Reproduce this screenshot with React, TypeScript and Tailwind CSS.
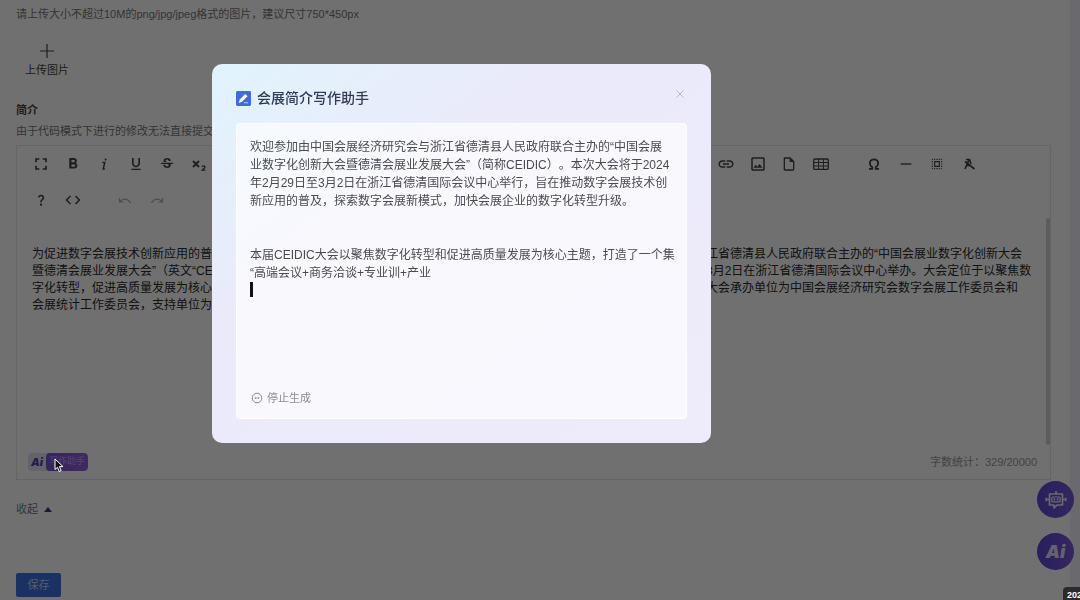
import type { ReactNode } from "react";
import { clsx } from "clsx";
import {
  MdCode,
  MdFormatBold,
  MdFormatUnderlined,
  MdFullscreen,
  MdHorizontalRule,
  MdLink,
  MdOutlineImage,
  MdOutlineInsertDriveFile,
  MdQuestionMark,
  MdSelectAll,
  MdStrikethroughS,
} from "react-icons/md";

type Tool = {
  label: string;
  icon: ReactNode;
  disabled?: boolean;
};

const ItalicIcon = () => (
  <svg viewBox="0 0 16 16" className="size-4" fill="none" stroke="currentColor">
    <path d="M6.5 6.5h2.3L7.2 13h1.6" strokeWidth="1.4" />
    <circle cx="9.6" cy="3.4" r="1" fill="currentColor" stroke="none" />
  </svg>
);

const SubscriptIcon = () => (
  <svg viewBox="0 0 16 16" className="size-4" fill="none" stroke="currentColor">
    <path d="M2 5l6 6M8 5l-6 6" strokeWidth="1.8" />
    <path d="M11.2 11c.2-1.6 2.9-1.4 2.8.1 0 1-1.6 1.7-2.8 3.1h3.2" strokeWidth="1.2" />
  </svg>
);

const TableIcon = () => (
  <svg viewBox="0 0 16 16" className="size-4" fill="none" stroke="currentColor">
    <rect x="0.7" y="3" width="14.6" height="10.4" rx="1" strokeWidth="1.3" />
    <path d="M1 6.5h14M1 10h14M5.6 3v10.4M10.4 3v10.4" strokeWidth="1" />
  </svg>
);

const OmegaIcon = () => (
  <svg viewBox="0 0 16 16" className="size-4" fill="none" stroke="currentColor">
    <path
      d="M3 12.8h3.3v-1.6C2.2 8.7 3.6 3.3 8 3.3s5.8 5.4 1.7 7.9v1.600H13"
      strokeWidth="1.7"
    />
  </svg>
);

const ClearFormatIcon = () => (
  <svg viewBox="0 0 16 16" className="size-4" fill="none" stroke="currentColor">
    <path d="M4 13L8 3.500" strokeWidth="1.600" />
    <path d="M5 3.500h3.500L10 8" strokeWidth="1.600" />
    <path d="M4 5.500l9.500 7.500M6 9.500h4" strokeWidth="1.600" />
  </svg>
);

const UndoIcon = ({ className }: { className?: string }) => (
  <svg viewBox="0 0 16 16" className={clsx("size-4", className)} fill="none" stroke="currentColor">
    <path d="M2.500 6v4h4M3 9.500c3-3.400 8-3.300 10.500 1.500" strokeWidth="1.200" />
  </svg>
);

const leftTools: Tool[] = [
  { label: "全屏", icon: <MdFullscreen className="size-5" /> },
  { label: "粗体", icon: <MdFormatBold className="size-[18px]" /> },
  { label: "斜体", icon: <ItalicIcon /> },
  { label: "下划线", icon: <MdFormatUnderlined className="size-4" /> },
  { label: "删除线", icon: <MdStrikethroughS className="size-4" /> },
  { label: "下标", icon: <SubscriptIcon /> },
];

const insertTools: Tool[] = [
  { label: "链接", icon: <MdLink className="size-[18px]" /> },
  { label: "图片", icon: <MdOutlineImage className="size-[18px]" /> },
  { label: "文件", icon: <MdOutlineInsertDriveFile className="size-4" /> },
  { label: "表格", icon: <TableIcon /> },
];

const extraTools: Tool[] = [
  { label: "特殊字符", icon: <OmegaIcon /> },
  { label: "分割线", icon: <MdHorizontalRule className="size-4" /> },
  { label: "全选", icon: <MdSelectAll className="size-[14px]" /> },
  { label: "清除格式", icon: <ClearFormatIcon /> },
];

const helpTools: Tool[] = [
  { label: "帮助", icon: <MdQuestionMark className="size-[14px]" /> },
  { label: "源代码", icon: <MdCode className="size-[18px]" /> },
];

const historyTools: Tool[] = [
  { label: "撤销", icon: <UndoIcon />, disabled: true },
  { label: "重做", icon: <UndoIcon className="-scale-x-100" />, disabled: true },
];

// Each line is split where the dialog covers it.
const articleLines = [
  {
    start: "为促进数字会展技术创新应用的普及",
    end: "江省德清县人民政府联合主办的“中国会展业数字化创新大会",
  },
  {
    start: "暨德清会展业发展大会”（英文“CEIDIC”",
    end: "3月2日在浙江省德清国际会议中心举办。大会定位于以聚焦数",
  },
  {
    start: "字化转型，促进高质量发展为核心",
    end: "大会承办单位为中国会展经济研究会数字会展工作委员会和",
  },
  { start: "会展统计工作委员会，支持单位为", end: "" },
];

function ToolGroup({ tools, className }: { tools: Tool[]; className?: string }) {
  return (
    <div className={clsx("flex items-center justify-between", className)}>
      {tools.map((tool) => (
        <button
          key={tool.label}
          type="button"
          aria-label={tool.label}
          disabled={tool.disabled}
          className="flex h-9 w-7 items-center justify-center text-[#444] disabled:text-[#b0b0b0]"
        >
          {tool.icon}
        </button>
      ))}
    </div>
  );
}

function Editor() {
  return (
    <section className="flex flex-col border border-[#e6e6ec]">
      <div className="flex pl-2.5">
        <ToolGroup tools={leftTools} className="w-[186px]" />
        <ToolGroup tools={insertTools} className="ml-auto w-[123px]" />
        <ToolGroup tools={extraTools} className="mr-[67px] ml-[25px] w-[123px]" />
      </div>
      <div className="flex pl-2.5">
        <ToolGroup tools={helpTools} className="w-[60px]" />
        <ToolGroup tools={historyTools} className="ml-6 w-[60px]" />
      </div>
      <div className="flex h-[227px]">
        <div className="flex-1 pt-7 pl-[15px] text-xs leading-[17px] text-[#2a2a2a]">
          {articleLines.map((line) => (
            <p key={line.start} className="flex justify-between whitespace-nowrap">
              <span>{line.start}</span>
              <span className="w-[340px]">{line.end}</span>
            </p>
          ))}
        </div>
        <div className="w-1 rounded-full bg-[#d2d2d6]" />
      </div>
      <div className="flex h-[34px] items-center justify-between pr-[13px] pl-[11px]">
        <button type="button" className="flex h-[18px] items-center overflow-hidden rounded bg-[#e3dff2]">
          <span className="w-[18px] font-['Inter',sans-serif] text-[11px] font-black text-[#5546a4] italic">
            Ai
          </span>
          <span className="flex h-full w-[42px] items-center justify-center rounded bg-linear-to-r from-[#7452d8] to-[#9560e0] text-[9px] text-[#b9a2f0]">
            写作助手
          </span>
        </button>
        <span className="text-[11px] text-[#999]">字数统计：329/20000</span>
      </div>
    </section>
  );
}

function FloatingButtons() {
  return (
    <div className="fixed right-1.5 bottom-[30px] flex flex-col gap-[15px]">
      <button
        type="button"
        aria-label="客服机器人"
        className="flex size-[37px] items-center justify-center rounded-full bg-linear-to-r from-[#5a4ad2] to-[#7a56da] text-[#f0ecff]"
      >
        <svg viewBox="0 0 22 20" className="h-5 w-[22px]" fill="none" stroke="currentColor">
          <path d="M4.500 4h13v11h-5.500l-3 3v-3H4.500z" strokeWidth="1.700" strokeLinejoin="round" />
          <rect x="6.800" y="7" width="8.400" height="4.800" rx="1" strokeWidth="1.200" />
          <path d="M9.300 8.300v2.200M12.700 8.300v2.200M11 1v3M1.300 7.800v3.400M20.700 7.800v3.400M2 9.500h2.500M17.500 9.500H20" strokeWidth="1.700" />
        </svg>
      </button>
      <button
        type="button"
        aria-label="AI 助手"
        className="flex size-[37px] items-center justify-center rounded-full bg-linear-to-r from-[#5a4ad2] to-[#7a56da] font-['Inter',sans-serif] text-lg font-black text-[#e4dcff] italic"
      >
        Ai
      </button>
    </div>
  );
}

function WritingDialog() {
  return (
    <div className="fixed inset-0 flex items-start bg-black/56 pt-16 pl-[212px]">
      <div
        role="dialog"
        aria-labelledby="dialog-title"
        className="w-full max-w-[499px] rounded-[10px] bg-[#ebebfa] bg-linear-to-br from-[#e0f4fd] via-[#ebeafa] via-35% to-[#eeecfb] px-6 pt-6 pb-6"
      >
        <header className="mb-[15px] flex h-5 items-center">
          <svg viewBox="0 0 16 16" className="mr-1.5 size-[15px]">
            <rect width="16" height="16" rx="1.500" fill="#416bd8" />
            <path d="M3 12.800l1-3.700L9.800 3.200l2.500 2.400-5.900 5.900z" fill="#fff" />
            <path d="M8.500 12.500h4.500" stroke="#b8caf5" strokeWidth="1.200" />
          </svg>
          <h2 id="dialog-title" className="text-sm font-medium text-[#2f3a55]">
            会展简介写作助手
          </h2>
          <button type="button" aria-label="关闭" className="mr-0.5 mb-2 ml-auto text-[#b9b9c8]">
            <svg viewBox="0 0 10 10" className="size-2.5" stroke="currentColor">
              <path d="M1.500 1.500l7 7M8.500 1.500l-7 7" />
            </svg>
          </button>
        </header>
        <div className="flex min-h-[296px] flex-col justify-between rounded-sm border border-white/70 bg-white/65 px-[13px] pt-[14px] pb-3">
          <div className="text-xs leading-[18px] whitespace-nowrap text-[#4a4a52]">
            <p>
              欢迎参加由中国会展经济研究会与浙江省德清县人民政府联合主办的“中国会展
              <br />
              业数字化创新大会暨德清会展业发展大会”（简称CEIDIC）。本次大会将于2024
              <br />
              年2月29日至3月2日在浙江省德清国际会议中心举行，旨在推动数字会展技术创
              <br />
              新应用的普及，探索数字会展新模式，加快会展企业的数字化转型升级。
            </p>
            <p className="mt-9">
              本届CEIDIC大会以聚焦数字化转型和促进高质量发展为核心主题，打造了一个集
              <br />
              “高端会议+商务洽谈+专业训+产业
            </p>
            <div className="h-[15px] w-[3px] bg-[#111]" />
          </div>
          <button type="button" className="flex items-center gap-1 text-[11px] text-[#8b8b96]">
            <svg viewBox="0 0 12 12" className="ml-px size-3" fill="none" stroke="currentColor">
              <circle cx="6" cy="6" r="4.800" />
              <path d="M4.300 5v2M7.700 5v2M4.300 6h3.400" strokeWidth="0.800" />
            </svg>
            停止生成
          </button>
        </div>
      </div>
    </div>
  );
}

export default function App() {
  return (
    <div className="min-h-screen bg-[#f1f0f7] pr-2.5 font-['Liberation_Sans','Noto_Sans_CJK_SC',sans-serif] text-[#444] [text-spacing-trim:space-all]">
      <main className="min-h-screen bg-white pt-1.5 pr-[19px] pl-4">
        <p className="text-[11px] leading-4 text-[#777]">
          请上传大小不超过10M的png/jpg/jpeg格式的图片，建议尺寸750*450px
        </p>
        <button
          type="button"
          className="mt-[14px] flex h-12 w-[62px] flex-col items-center justify-center gap-[3px] text-[11px] leading-4"
        >
          <svg viewBox="0 0 16 16" className="size-4" stroke="currentColor">
            <path d="M8 1v14M1 8h14" strokeWidth="1.200" />
          </svg>
          上传图片
        </button>
        <h3 className="mt-[18px] text-[11px] leading-4 font-bold">简介</h3>
        <p className="mt-[5px] mb-1.5 text-[11px] leading-4 text-[#777]">
          由于代码模式下进行的修改无法直接提交。
        </p>
        <Editor />
        <button type="button" className="mt-[21px] flex items-center gap-1.5 text-[11px] leading-4 text-[#77779c]">
          收起
          <svg viewBox="0 0 8 5" className="h-[5px] w-2" fill="#3c3c80">
            <path d="M4 0l4 5H0z" />
          </svg>
        </button>
        <button type="button" className="mt-14 h-6 w-[45px] rounded-xs bg-[#3c70e0] text-[11px] text-[#c5d2f5]">
          保存
        </button>
      </main>
      <FloatingButtons />
      <WritingDialog />
      <div className="fixed right-0 bottom-0 h-[13px] w-[17px] overflow-hidden rounded-tl bg-[#2b2b2b] pl-1 text-[9px] leading-4 font-bold whitespace-nowrap text-white">
        202
      </div>
      {/* mouse pointer over the assistant button */}
      <svg viewBox="0 0 10 15" className="fixed top-[458px] left-[54px] h-[15px] w-2.5">
        <path
          d="M1 1v10.500l2.500-2.200L5.200 13.500l2-.9-1.800-4H9z"
          fill="#111"
          stroke="#fff"
          strokeWidth="1"
        />
      </svg>
    </div>
  );
}
